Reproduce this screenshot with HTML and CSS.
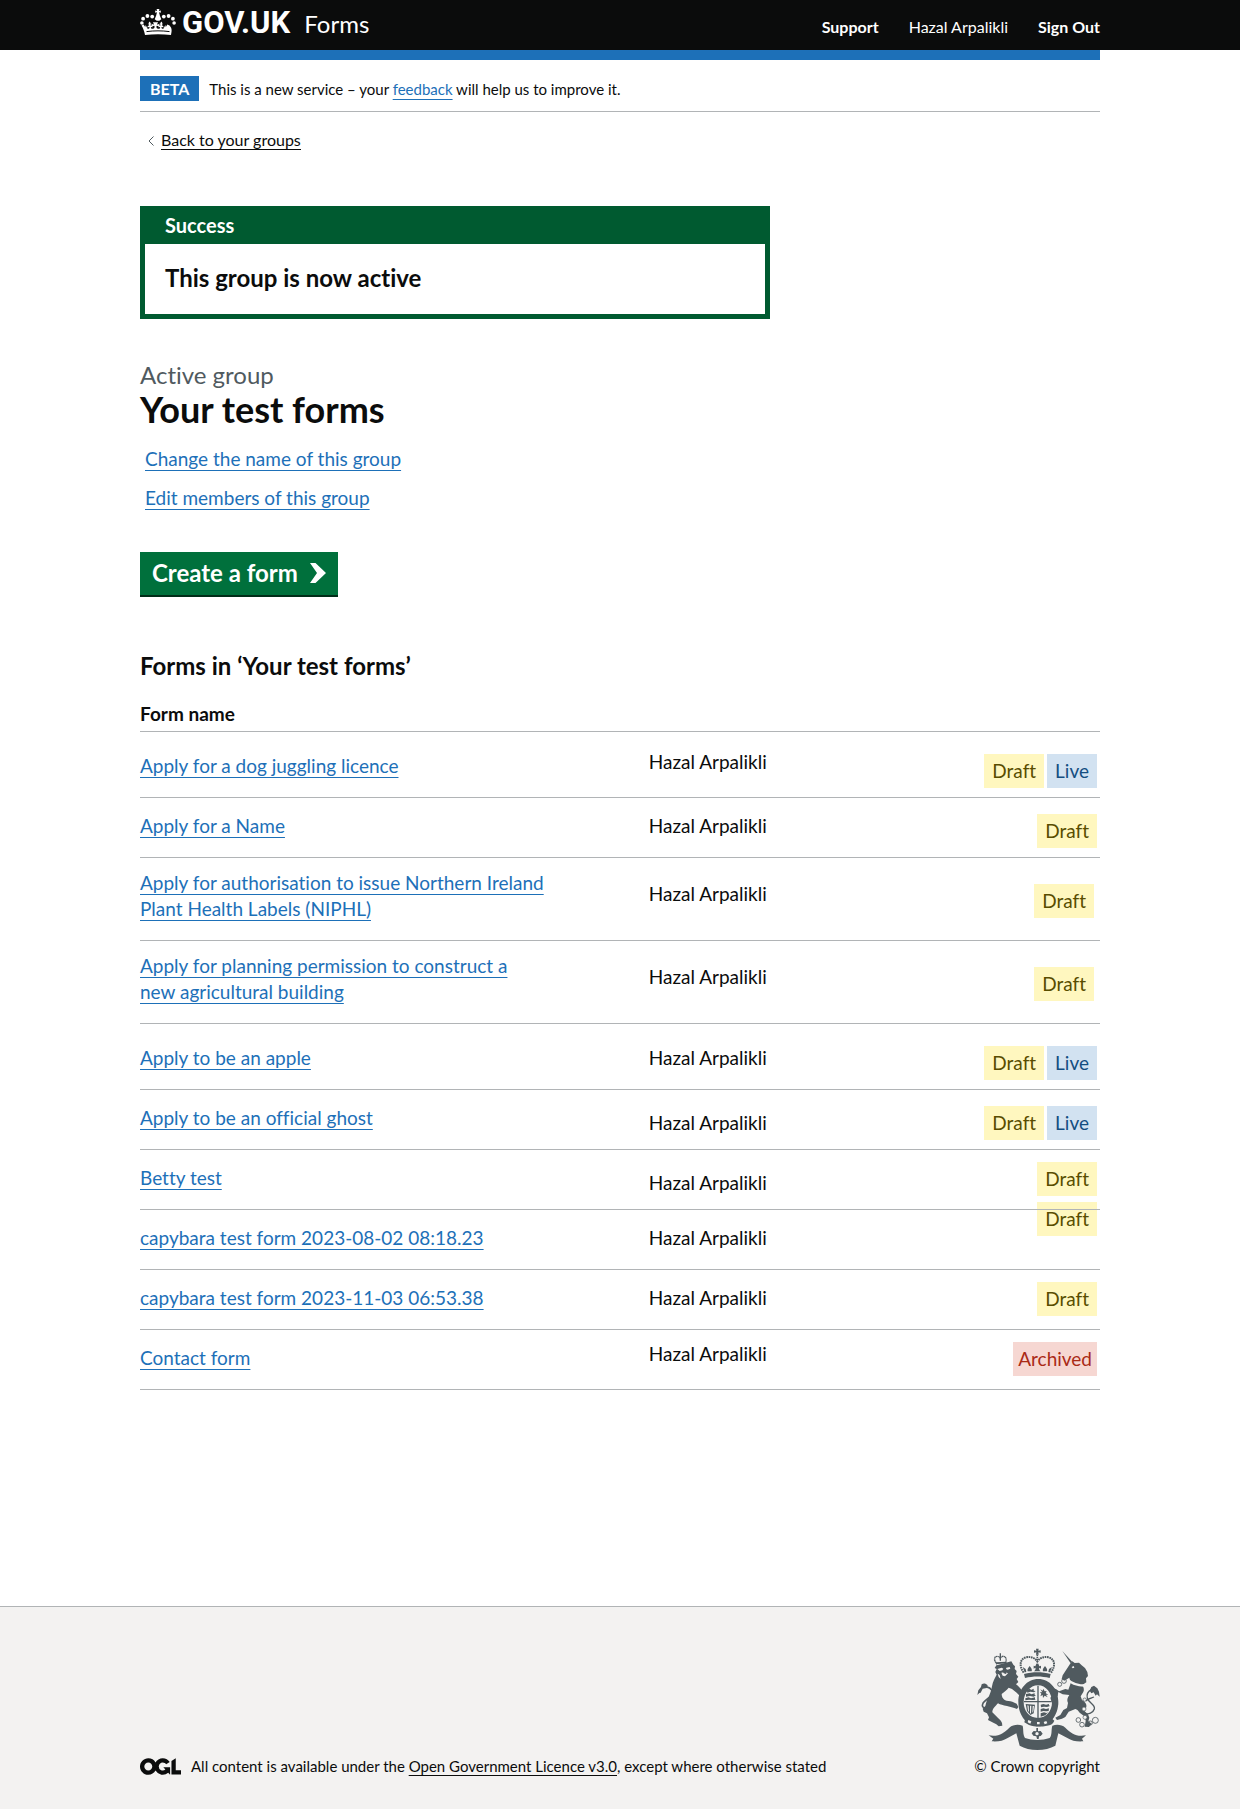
FILE: index.html
```html
<!DOCTYPE html>
<html lang="en">
<head>
<meta charset="utf-8">
<meta name="viewport" content="width=device-width, initial-scale=1">
<title>Your test forms – GOV.UK Forms</title>
<link rel="stylesheet" href="styles.css">
</head>
<body>
<header class="header">
  <div class="container header-row">
    <a class="brand" href="#">
      <svg class="crown" viewBox="0 0 36 26" width="36" height="26" aria-hidden="true">
        <g fill="currentColor">
          <path d="M17 3.2 15.2 3.8V1.6l1.9.5L16.6 0h2.8l-.5 2.1 1.9-.5v2.2L19 3.2l.9 3.6 1.4 3.4-2 1.6h-2.6l-2-1.6 1.4-3.4z"/>
          <circle cx="12.2" cy="7.600" r="1.900"/><circle cx="7.4" cy="7" r="1.900"/><circle cx="3.1" cy="9.700" r="1.900"/><circle cx="1.900" cy="14" r="1.800"/>
          <circle cx="23.8" cy="7.600" r="1.900"/><circle cx="28.6" cy="7" r="1.900"/><circle cx="32.9" cy="9.700" r="1.900"/><circle cx="34.1" cy="14" r="1.800"/>
          <path d="M5 26C4.400 22.500 3.400 19.500 1.500 16.400l2.200-.9c.5 1 .8 1.800 1.500 2.400l.5-2 1.700 3.600c.9.500 2 .2 2.200-1-.6-.9-1.400-.5-1.900.2-.5-1.700.6-2.400 1.700-2-1.200-1.300-1.200-2.600.1-4.200 1.500 1.400 1.700 2.800.8 4.300 1.200-.6 2.300.1 2 1.600-.6-.5-1.200-.5-1.500.300.400 1.600 2.900 1.600 3.700-.3.200-.7.100-1.200-.3-1.700-.8 0-1.600.4-2.300 1.300l-.4-3.500c.8.7 1.700 1 2.600.9l-1.200-2.200h5.200l-1.200 2.200c.9.100 1.800-.2 2.600-.9l-.4 3.500c-.7-.9-1.500-1.300-2.300-1.300-.4.500-.5 1-.3 1.700.8 1.900 3.300 1.900 3.700.3-.3-.8-.9-.8-1.500-.3-.3-1.500.8-2.200 2-1.600-.9-1.500-.7-2.900.8-4.300 1.300 1.600 1.300 2.900.1 4.200 1.100-.4 2.200.3 1.700 2-.5-.7-1.300-1.100-1.900-.2.200 1.200 1.300 1.500 2.200 1l1.700-3.600.5 2c.7-.6 1-1.400 1.500-2.400l2.200.9C32.600 19.500 31.600 22.500 31 26c-8-.9-18-.9-26 0z"/>
          <path d="M6.500 22.600c7.500-1 15.500-1 23 0" fill="none" stroke="#0b0c0c" stroke-width="1"/>
        </g>
      </svg>
      <span class="brand-name">GOV.UK</span>
      <span class="product">Forms</span>
    </a>
    <nav class="account" aria-label="Account">
      <a href="#" class="account-link">Support</a>
      <span>Hazal Arpalikli</span>
      <a href="#" class="account-link">Sign Out</a>
    </nav>
  </div>
</header>

<div class="container">
  <div class="phase">
    <strong class="phase-tag">BETA</strong>
    <p class="phase-text">This is a new service – your <a class="link" href="#">feedback</a> will help us to improve it.</p>
  </div>
  <a class="back" href="#">
    <svg viewBox="0 0 6 10" width="6" height="10" aria-hidden="true"><path d="M5.500.5 1 5l4.500 4.500" fill="none" stroke="#505a5f"/></svg>
    <span>Back to your groups</span>
  </a>
</div>

<main class="container main">
  <section class="notice" aria-labelledby="notice-title">
    <h2 class="notice-title" id="notice-title">Success</h2>
    <p class="notice-body">This group is now active</p>
  </section>

  <p class="caption">Active group</p>
  <h1 class="title">Your test forms</h1>

  <ul class="actions">
    <li><a class="link" href="#">Change the name of this group</a></li>
    <li><a class="link" href="#">Edit members of this group</a></li>
  </ul>

  <button class="start" type="button">
    Create a form
    <svg viewBox="0 0 16 20" width="16" height="20" aria-hidden="true"><path d="M0 0h5.500L16 10 5.500 20H0l7-10z" fill="currentColor"/></svg>
  </button>

  <h2 class="subtitle" id="forms-title">Forms in ‘Your test forms’</h2>

  <table class="forms" aria-labelledby="forms-title">
    <thead>
      <tr><th class="col-name" scope="col">Form name</th><td class="col-owner"></td><td></td></tr>
    </thead>
    <tbody>
      <tr class="row-tall"><td><a class="link" href="#">Apply for a dog juggling licence</a></td><td class="raised">Hazal Arpalikli</td><td class="status"><span class="tag draft">Draft</span><span class="tag live">Live</span></td></tr>
      <tr><td><a class="link" href="#">Apply for a Name</a></td><td>Hazal Arpalikli</td><td class="status"><span class="tag draft">Draft</span></td></tr>
      <tr class="row-double"><td><a class="link" href="#">Apply for authorisation to issue Northern Ireland Plant Health Labels (NIPHL)</a></td><td>Hazal Arpalikli</td><td class="status"><span class="tag draft">Draft</span></td></tr>
      <tr class="row-double"><td><a class="link" href="#">Apply for planning permission to construct a new agricultural building</a></td><td>Hazal Arpalikli</td><td class="status"><span class="tag draft">Draft</span></td></tr>
      <tr class="row-tall"><td><a class="link" href="#">Apply to be an apple</a></td><td>Hazal Arpalikli</td><td class="status"><span class="tag draft">Draft</span><span class="tag live">Live</span></td></tr>
      <tr><td><a class="link" href="#">Apply to be an official ghost</a></td><td class="lowered">Hazal Arpalikli</td><td class="status"><span class="tag draft">Draft</span><span class="tag live">Live</span></td></tr>
      <tr><td><a class="link" href="#">Betty test</a></td><td class="lowered">Hazal Arpalikli</td><td class="status raised"><span class="tag draft">Draft</span></td></tr>
      <tr><td><a class="link" href="#">capybara test form 2023-08-02 08:18.23</a></td><td>Hazal Arpalikli</td><td class="status"><span class="tag draft overlap">Draft</span></td></tr>
      <tr><td><a class="link" href="#">capybara test form 2023-11-03 06:53.38</a></td><td>Hazal Arpalikli</td><td class="status raised"><span class="tag draft">Draft</span></td></tr>
      <tr><td><a class="link" href="#">Contact form</a></td><td class="raised">Hazal Arpalikli</td><td class="status raised"><span class="tag archived">Archived</span></td></tr>
    </tbody>
  </table>
</main>

<footer class="footer">
  <div class="container footer-row">
    <p class="licence">
      <svg viewBox="0 0 483.200 195.700" width="41" height="17" role="img" aria-label="Open Government Licence"><path fill="currentColor" d="M421.500 142.800V.1l-50.700 32.300v161.100h112.400v-50.700zm-122.300-9.600A47.120 47.120 0 0 1 221 97.800c0-26 21.100-47.100 47.100-47.100 16.700 0 31.400 8.700 39.700 21.800l42.700-27.200A97.630 97.630 0 0 0 268.100 0c-36.500 0-68.300 20.100-85.100 49.700A98 98 0 0 0 97.800 0C43.900 0 0 43.900 0 97.800s43.900 97.800 97.800 97.800c36.500 0 68.300-20.100 85.100-49.700a97.760 97.760 0 0 0 149.600 25.400l19.400 22.200h3v-87.800h-80l24.300 27.500zM97.800 145c-26 0-47.100-21.100-47.100-47.100s21.100-47.100 47.100-47.100 47.100 21.100 47.100 47.100S123.800 145 97.800 145"/></svg>
      <span>All content is available under the <a href="#">Open Government Licence v3.0</a>, except where otherwise stated</span>
    </p>
    <a class="copyright" href="#">
      <svg viewBox="48 56 369 306" width="123" height="102" aria-hidden="true">
        <g fill="#505a5f">
          <!-- crown -->
          <path d="M225 58h8l-1 6 7-1v7l-7-1 1 7h-8l1-7-7 1v-7l7 1z"/>
          <path d="M189 134c26-7 54-7 80 0l-3 12c-24-6-50-6-74 0z"/>
          <path d="M200 126c-2-6 1-10 6-16 5 6 8 10 6 16zM246 126c-2-6 1-10 6-16 5 6 8 10 6 16zM219 126c4-4 6-7 4-11l-5 3v-9l5 2 3-8h6l3 8 5-2v9l-5-3c-2 4 0 7 4 11zM191 129l-6-16 9 6 2 9zM267 129l6-16-9 6-2 9z"/>
          <g fill="none" stroke="#505a5f">
            <path d="M188 130c-15-22-11-42 8-46 14-3 26 2 33 12 7-10 19-15 33-12 19 4 23 24 8 46" stroke-width="6" stroke-dasharray="5 2"/>
            <path d="M229 76v26" stroke-width="5" stroke-dasharray="4 2"/>
          </g>
          <!-- garter and shield -->
          <path fill-rule="evenodd" d="M232 149c34 0 60 30 60 69 0 40-26 73-60 73s-60-33-60-73c0-39 26-69 60-69zm-1 19c-24 0-43 23-43 51 0 26 17 47 43 47 25 0 42-21 42-47 0-28-18-51-42-51z"/>
          <path d="M229 169h4v97h-4zM189 215h83v4h-83z"/>
          <path d="M197 181l10-3 3 4 8-4v6l6 1-5 4-11-2-9 3zM195 194l11-2 5 3 10-3v5l4 1-7 4-11-2-12 2zM193 207l9-3 8 3 12-3v5l2 2-8 1-12-1-11 2zM239 226l8-2 8 2 9-2v4l3 2-9 3-9-1-9 2zM239 239l8-2 8 2 9-2-1 8-7 1-9-1-8 2zM239 252l10-3 7 2 5-2-8 9-14 4z"/>
          <path d="M238 180l7 4 2-6 4 8 6-1-3 6 8 6-7-1 5 8-9-5-5 7-1-9-7 4 3-8-4-5 7 1z"/>
          <path d="M194 224l28 2-4 26-10 5-10-12zm5 4 2 16 3 4-1-19zm8 1v22l3 2 1-24zm8 1-1 20 3-4 2-16z" fill-rule="evenodd"/>
          <path d="M194 264c24 14 52 14 74 0l12 10c-4 10-12 14-22 15-18 4-36 4-54-2l-14-8z"/>
          <g fill="#f3f2f1"><path d="M202 272l9 4-3 7-8-4zM228 278h8v7h-8zM248 278l8-3 3 7-8 3z"/></g>
          <!-- lion -->
          <g fill="none" stroke="#505a5f" stroke-width="3"><path d="M105 100c-8-10-4-20 5-19 4 0 7 3 8 7 1-5 5-8 10-7 9 2 9 14 5 19" stroke-width="4" stroke-dasharray="4 1"/><path d="M118 72v22" stroke-width="4"/></g>
          <path d="M103 99l33-2 1 5-32 3z"/>
          <path d="M107 108l44-12 6 10 5 5-1 8 6 6-2 9 7 8-5 7 5 9-7 7c6 5 14 12 19 20l5 9-4 6-9-1-9-9-14-11-10-4c-6 8-13 12-21 19 0 8 3 14 9 18 7 4 16 3 23 5l13 6 5 10-4 6-8-3-22-6c-12-2-20-4-27-8-8 9-17 16-17 27l12 12c7 7 14 12 17 20l1 8-11 2-7-6-12-6-13-7 3-8-6-12-10-5-3-9 8-8c3-10 4-19 10-27 4-9 8-20 10-32 2-14 9-25 14-35l-4-8 4-9-6-3 7-11-3-9z"/>
          <path d="M80 168l-3 8-12 2-6 12-4 1-6 6 3-14 8-10 2-8c6-4 12-3 18 3z"/>
          <path d="M75 172c18 5 22 14 17 25-5 9-24 16-27 27-3 8 2 12 10 13" fill="none" stroke="#505a5f" stroke-width="5"/>
          <g fill="#f3f2f1"><path d="M109 119l13-4 5 3-3 5-8 2zM136 115l10-2 2 5-8 3-5-2zM121 130l12-2 8 4-9 9-7-2zM110 133l6 4 3 12-6-6z"/></g>
          <path d="M127 119l5-2 5 14-3 3-7-3z"/>
          <!-- unicorn -->
          <path d="M304 65l30 33-5 4z"/>
          <path d="M327 104l7-8 7 5 13-1 8 8 10 8 7 12 2 12-6 7 1 12-11 7c2 8 6 15 2 22l-8 13 4 11c10 6 15 13 13 21l-5 13 10 9 4 10-3 11 10 7-8 10-13-1 3-17-2-13-16-12c-5-7-8-10-13-11l-20 8-10 16-10 5-15 4-5-7 15-8 9-15 11-6 3-15c-4-8-2-16 4-24l-20-2-13-7-2 12-9 4 4 14 7 6-9 5-11-10-4-14 9-8-1-12-12-4 8-7 14 6 8 6 19-7 9 2 7-19-4-17-15 9-8-5 3-11z"/>
          <path d="M374 215c5-7 18-9 25-12M372 252c10 4 24-1 28-13 4-14-18-18-21-33-3-12 3-20 12-25" fill="none" stroke="#505a5f" stroke-width="4"/>
          <path d="M386 184l5-11 8-4 10 8 5 10 2 15-8-7-4 4-6-10-7 3z"/>
          <g fill="#f3f2f1"><path d="M323 148l8 7 13 6 15 4 11 0-1 7-15-1-17-5-16-9zM332 113l6-3 2 5-5 2z"/></g>
          <g fill="none" stroke="#505a5f" stroke-width="2.500"><circle cx="309" cy="155" r="7"/><circle cx="296" cy="165" r="6"/><circle cx="352" cy="272" r="7"/><circle cx="363" cy="286" r="7"/><circle cx="388" cy="281" r="6"/><circle cx="403" cy="273" r="9"/></g>
          <g fill="#f3f2f1" stroke="#505a5f" stroke-width="2"><circle cx="371" cy="211" r="5"/><circle cx="369" cy="239" r="6"/><circle cx="372" cy="264" r="6"/></g>
          <!-- scroll and rose -->
          <path d="M83 318c31 5 45-7 62-23 11-9 26-11 40-6 3 12 0 25 7 37 22 8 52 8 74 0 8-11 4-24 8-37 14-5 28-3 39 6 17 16 31 28 62 23l-12 10 4 8c-21 1-34-1-48-10l-27-14-9 37c-29 17-79 17-107 0l-10-37-26 14c-14 9-27 11-48 10l5-8z"/>
          <path d="M194 292c24 5 46 5 70 0-5 10-2 20-6 30-18 5-40 5-58 0-5-10-2-20-6-30z" fill="#f3f2f1"/>
          <path d="M226 296h5v10l8-1 6 8-6 7-5 1-1 8h-5l-2-8-9-2-5-7 6-7 8 1z"/>
          <circle cx="228" cy="313" r="5" fill="#f3f2f1"/>
        </g>
      </svg>
      <span>© Crown copyright</span>
    </a>
  </div>
</footer>
</body>
</html>
```
FILE: styles.css
```css
* { box-sizing: border-box; }

body {
  display: flex;
  flex-direction: column;
  min-height: 100vh;
  margin: 0;
  background: #fff;
  color: #0b0c0c;
  font: 19px/26px Lato, "Liberation Sans", sans-serif;
  font-variant-ligatures: none;
}

h1, h2, p, ul { margin: 0; }

.container {
  width: calc(100% - 60px);
  max-width: 960px;
  margin: 0 auto;
}

.link {
  color: #1d70b8;
  text-decoration: underline;
  text-decoration-thickness: 1px;
  text-decoration-skip-ink: none;
  text-underline-offset: 4px;
}

/* Header */
.header { background: #0b0c0c; color: #fff; }
.header-row {
  display: flex;
  justify-content: space-between;
  align-items: flex-start;
  height: 50px;
}
.brand {
  display: flex;
  align-items: baseline;
  padding-top: 5px;
  color: #fff;
  line-height: 36px;
  text-decoration: none;
}
.crown { align-self: flex-start; margin-top: 4px; }
.brand-name { margin-left: 6px; font-family: Roboto, "Liberation Sans", sans-serif; font-size: 31px; font-weight: 700; }
.product { margin-left: 14px; font-size: 24px; }
.account {
  display: flex;
  gap: 30px;
  padding-top: 14px;
  font-size: 16px;
}
.account-link { color: #fff; font-weight: 700; text-decoration: none; }

/* Phase banner */
.phase {
  display: flex;
  align-items: center;
  gap: 10px;
  padding: 16px 0 10px;
  border-top: 10px solid #1d70b8;
  border-bottom: 1px solid #b1b4b6;
}
.phase-tag {
  padding: 0 10px;
  background: #1d70b8;
  color: #fff;
  font-size: 16px;
  line-height: 25px;
}
.phase-text { font-size: 15px; line-height: 24px; }

.back {
  display: inline-flex;
  align-items: center;
  gap: 7px;
  margin: 19px 0 0 8px;
  color: #0b0c0c;
  font-size: 16px;
  line-height: 24px;
  text-decoration: none;
}
.back span { border-bottom: 1px solid; line-height: 18px; }

/* Content */
.main { flex: 1; padding: 54px 0 210px; }

.notice {
  max-width: 630px;
  margin-bottom: 42px;
  border: 5px solid #005a30;
}
.notice-title {
  padding: 1px 20px 6px;
  background: #005a30;
  color: #fff;
  font-size: 20px;
  line-height: 26px;
}
.notice-body {
  padding: 19px 20px 21px;
  font-size: 24px;
  font-weight: 700;
  line-height: 30px;
}

.caption { color: #505a5f; font-size: 24px; line-height: 28px; }
.title { font-size: 36px; line-height: 40px; }

.actions {
  display: grid;
  gap: 13px;
  margin-top: 17px;
  padding-left: 5px;
  list-style: none;
}

.start {
  display: inline-flex;
  align-items: center;
  gap: 12px;
  margin-top: 41px;
  padding: 6px 12px 7px;
  border: 0;
  border-bottom: 2px solid #002d18;
  background: #00703c;
  color: #fff;
  font: 700 24px/30px Lato, "Liberation Sans", sans-serif;
}

.subtitle { margin-top: 54px; font-size: 24px; line-height: 30px; }

/* Forms table */
.forms {
  width: 100%;
  margin-top: 15px;
  border-collapse: collapse;
  table-layout: fixed;
}
.col-name { width: 53%; text-align: left; }
.col-owner { width: 25%; }
.forms tr { height: 60px; border-bottom: 1px solid #b1b4b6; }
.forms thead tr { height: 36px; }
.forms .row-tall { height: 66px; }
.forms .row-double { height: 83px; }
.forms th { padding: 0 0 4px; vertical-align: bottom; }
.forms td { padding: 0 0 18px; vertical-align: bottom; }
.forms td:first-child { padding-right: 104px; }
.forms .lowered { padding-bottom: 13px; }
.forms .raised { padding-bottom: 22px; }
.forms .row-double td + td { padding-bottom: 33px; }

.forms .status {
  position: relative;
  padding-right: 3px;
  padding-bottom: 9px;
  text-align: right;
}
.forms .status.raised { padding-bottom: 13px; }
.forms .row-double .status { padding-right: 6px; padding-bottom: 22px; }

.tag {
  display: inline-block;
  padding: 4px 8px;
  vertical-align: bottom;
}
.tag + .tag { margin-left: 3px; }
.draft { background: #fff7bf; color: #594d00; }
.live { background: #d2e2f1; color: #144e81; }
.archived { padding: 4px 5px; background: #f6d7d2; color: #aa2a16; }

/* A status that straddles the rule above its row */
.overlap { position: absolute; z-index: -1; top: -8px; right: 3px; }

/* Footer */
.footer {
  padding: 41px 0 31px;
  border-top: 1px solid #b1b4b6;
  background: #f3f2f1;
  font-size: 15px;
  line-height: 24px;
}
.footer-row {
  display: flex;
  justify-content: space-between;
  align-items: flex-end;
}
.licence { display: flex; align-items: center; gap: 10px; }
.footer a { color: #0b0c0c; }
.licence a { text-decoration-thickness: 1px; text-decoration-skip-ink: none; text-underline-offset: 3px; }
.footer .copyright {
  display: flex;
  flex-direction: column;
  align-items: flex-end;
  gap: 4px;
  text-decoration: none;
}
```
